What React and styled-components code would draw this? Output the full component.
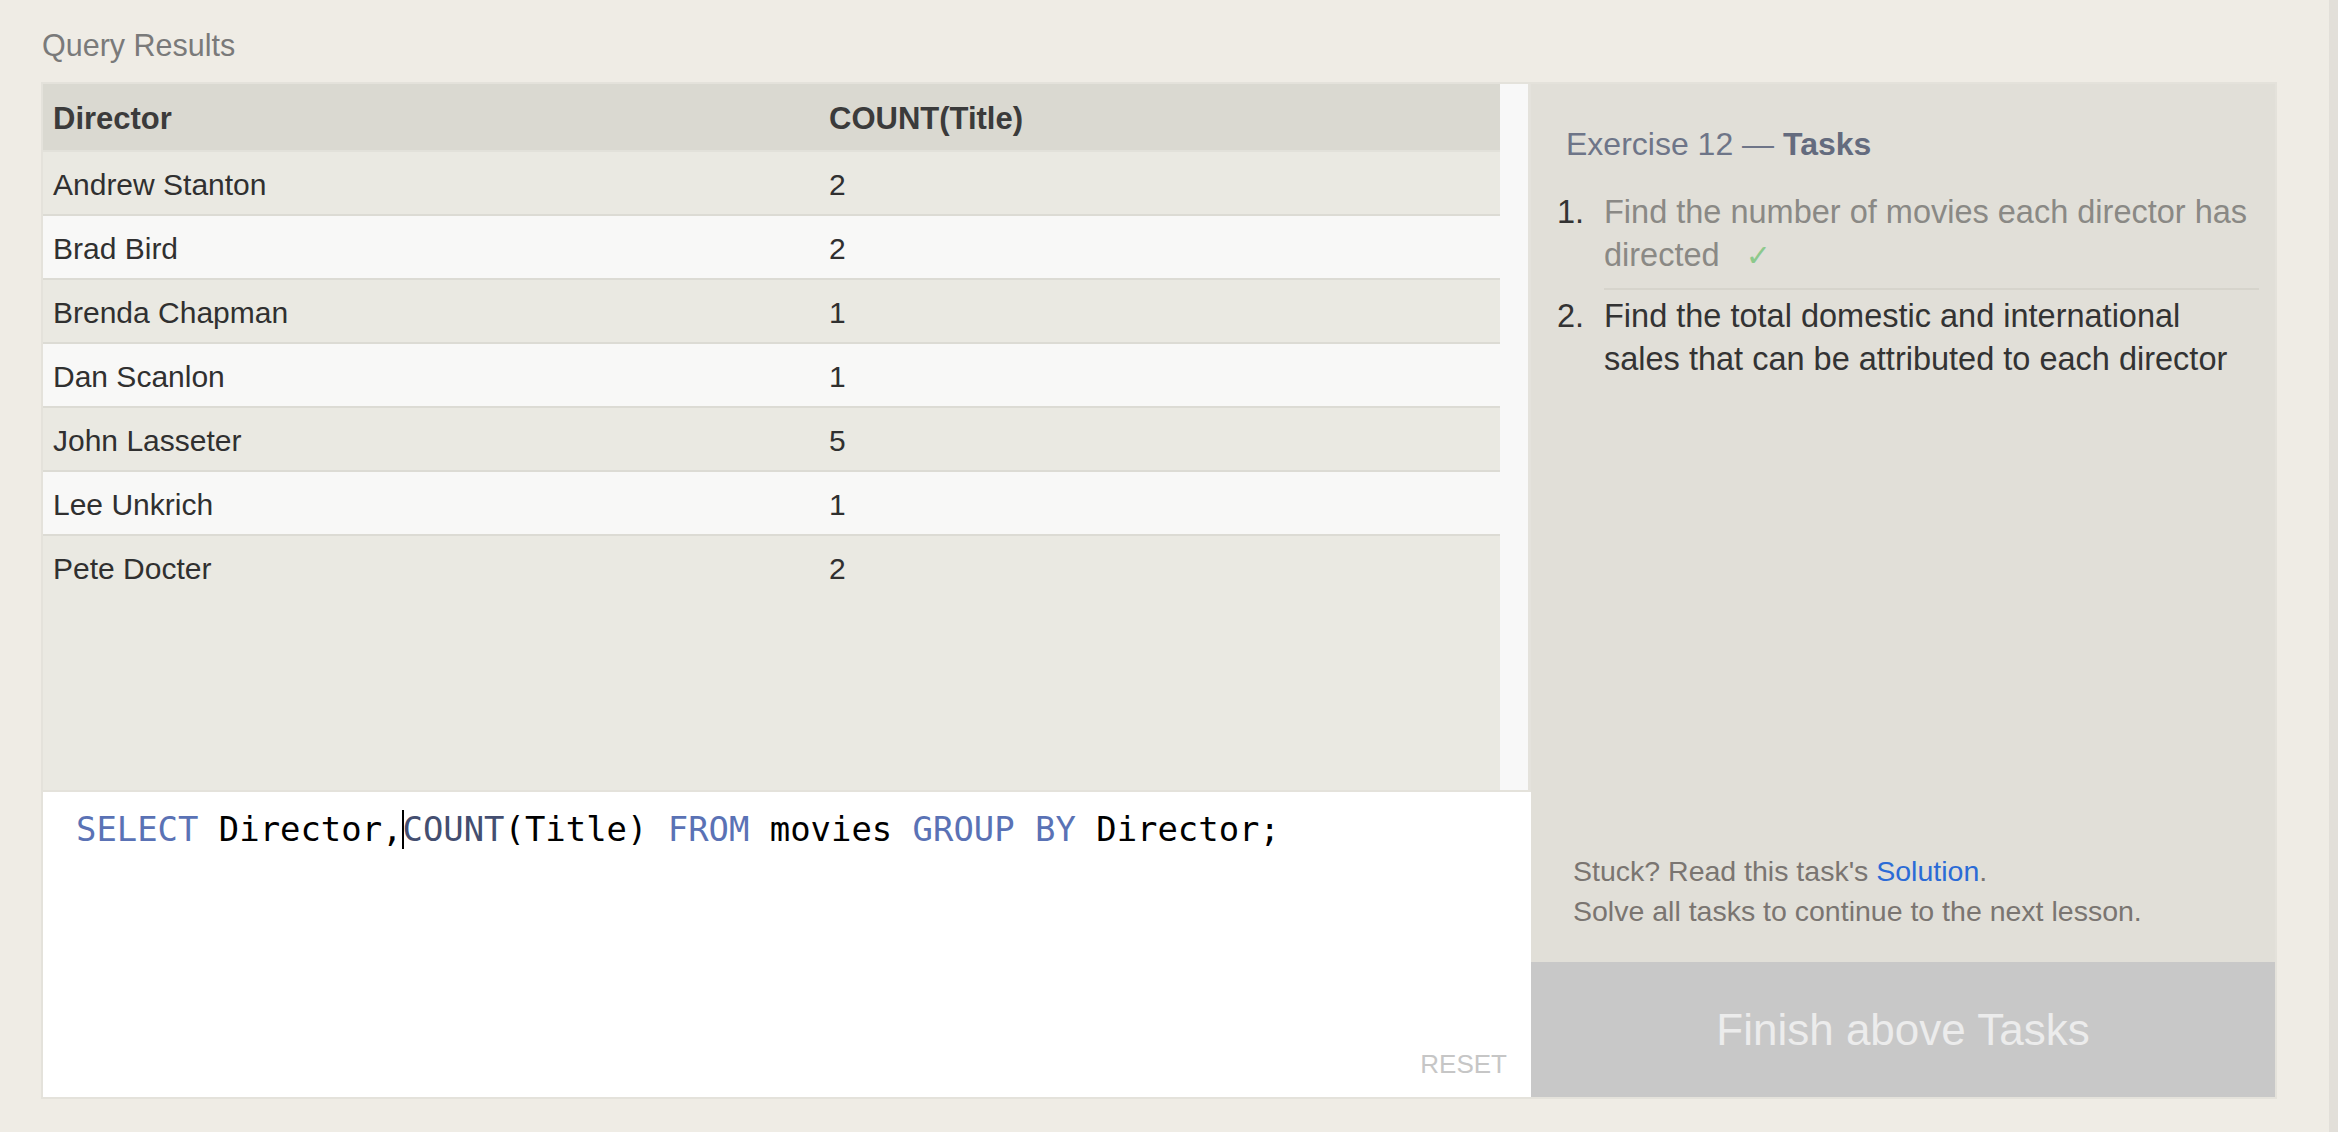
import React from "react";
import styled, { createGlobalStyle } from "styled-components";

const GlobalStyle = createGlobalStyle`
  html, body {
    margin: 0;
    padding: 0;
    background: #efece5;
    font-family: "Liberation Sans", Arial, sans-serif;
  }
`;

const rows = [
  ["Andrew Stanton", 2],
  ["Brad Bird", 2],
  ["Brenda Chapman", 1],
  ["Dan Scanlon", 1],
  ["John Lasseter", 5],
  ["Lee Unkrich", 1],
  ["Pete Docter", 2],
];

const App = () => {
  return (
    <Page>
      <GlobalStyle />
      <Main>
        <Heading>Query Results</Heading>
        <Workspace>
          <LeftColumn>
            <ResultsArea>
              <TableScroll>
                <HeaderRow>
                  <HeaderCell>Director</HeaderCell>
                  <HeaderCell>COUNT(Title)</HeaderCell>
                </HeaderRow>
                {rows.map(([name, count], i) => (
                  <Row key={name} $alt={i % 2 === 1}>
                    <Cell>{name}</Cell>
                    <Cell>{count}</Cell>
                  </Row>
                ))}
              </TableScroll>
              <ScrollTrack />
            </ResultsArea>
            <Editor>
              <CodeLine>
                <Token $kind="keyword">SELECT</Token> Director,
                <Caret />
                <Token $kind="func">COUNT</Token>(Title){" "}
                <Token $kind="keyword">FROM</Token> movies{" "}
                <Token $kind="keyword">GROUP BY</Token> Director;
              </CodeLine>
              <ResetButton>RESET</ResetButton>
            </Editor>
          </LeftColumn>
          <TaskColumn>
            <TaskPanel>
              <TaskTitle>
                Exercise 12 — <strong>Tasks</strong>
              </TaskTitle>
              <TaskList>
                <TaskItem $done>
                  <TaskNum>1.</TaskNum>
                  <TaskText $done>
                    Find the number of movies each director has directed
                    <Check>✓</Check>
                  </TaskText>
                </TaskItem>
                <TaskItem>
                  <TaskNum>2.</TaskNum>
                  <TaskText>
                    Find the total domestic and international sales that can be
                    attributed to each director
                  </TaskText>
                </TaskItem>
              </TaskList>
              <Footer>
                Stuck? Read this task's <SolutionLink>Solution</SolutionLink>.
                <br />
                Solve all tasks to continue to the next lesson.
              </Footer>
            </TaskPanel>
            <FinishButton>Finish above Tasks</FinishButton>
          </TaskColumn>
        </Workspace>
      </Main>
      <Gutter />
    </Page>
  );
};

const Page = styled.div`
  display: flex;
  min-height: 100vh;
`;

const Main = styled.main`
  flex: 1;
  padding: 27px 0 0 41px;
`;

const Gutter = styled.div`
  width: 9px;
  background: #e2dfd9;
`;

const Heading = styled.h2`
  margin: 0 0 19px 1px;
  font-size: 30.5px;
  line-height: 36px;
  font-weight: 400;
  color: #7a7a7a;
`;

const Workspace = styled.div`
  display: grid;
  grid-template-columns: 1488px 744px;
  width: 2232px;
  border: 2px solid #e4e2db;
`;

const LeftColumn = styled.div`
  display: flex;
  flex-direction: column;
`;

const ResultsArea = styled.div`
  display: flex;
  height: 706px;
  border-bottom: 2px solid #e4e2db;
`;

const TableScroll = styled.div`
  flex: 1;
  background: #eae9e2;
  color: #333;
`;

const HeaderRow = styled.div`
  display: grid;
  grid-template-columns: 776px 1fr;
  height: 66px;
  background: #dad9d1;
  border-bottom: 2px solid #e2e1da;
`;

const HeaderCell = styled.div`
  padding: 3px 10px 0;
  font-size: 31px;
  line-height: 63px;
  font-weight: 700;
  color: #3b3b3b;
`;

const Row = styled.div`
  display: grid;
  grid-template-columns: 776px 1fr;
  height: 62px;
  background: ${(p) => (p.$alt ? "#f8f8f7" : "#eae9e2")};
  border-bottom: 2px solid #dcdbd4;

  &:last-child {
    border-bottom-color: transparent;
  }
`;

const Cell = styled.div`
  padding: 3px 10px 0;
  font-size: 30px;
  line-height: 59px;
  color: #303030;
`;

const ScrollTrack = styled.div`
  width: 28px;
  background: #f8f8f8;
  border-right: 3px solid #e4e2dc;
`;

const Editor = styled.div`
  box-sizing: border-box;
  height: 305px;
  display: flex;
  flex-direction: column;
  background: #ffffff;
  padding: 18px 24px 18px 33px;
`;

const CodeLine = styled.div`
  font-family: "DejaVu Sans Mono", "Liberation Mono", monospace;
  font-size: 33.9px;
  line-height: 40px;
  color: #000;
  white-space: pre;
`;

const tokenColors = {
  keyword: "#5a72b5",
  func: "#444e70",
};

const Token = styled.span`
  color: ${(p) => tokenColors[p.$kind]};
`;

const Caret = styled.span`
  display: inline-block;
  width: 2px;
  height: 39px;
  margin-right: -2px;
  vertical-align: top;
  background: #000;
`;

const ResetButton = styled.div`
  margin-top: auto;
  align-self: flex-end;
  font-size: 26px;
  line-height: 30px;
  color: #c6c6c6;
`;

const TaskColumn = styled.div`
  display: flex;
  flex-direction: column;
`;

const TaskPanel = styled.div`
  flex: 1;
  display: flex;
  flex-direction: column;
  background: #e1dfd8;
  padding: 40px 16px 31px 35px;
`;

const TaskTitle = styled.h3`
  margin: 0 0 27px;
  font-size: 32px;
  line-height: 40px;
  font-weight: 400;
  color: #6e7588;

  strong {
    font-weight: 700;
    color: #646b7e;
  }
`;

const TaskList = styled.ol`
  margin: 0 0 0 -9px;
  padding: 0;
  list-style: none;
`;

const TaskItem = styled.li`
  display: grid;
  grid-template-columns: 47px 1fr;
  padding-bottom: ${(p) => (p.$done ? "11px" : "0")};
  margin-bottom: ${(p) => (p.$done ? "5px" : "0")};
  font-size: 32.5px;
  line-height: 43px;
`;

const TaskNum = styled.span`
  color: #333;
`;

const TaskText = styled.span`
  color: ${(p) => (p.$done ? "#8a8985" : "#333")};
  padding-bottom: ${(p) => (p.$done ? "11px" : "0")};
  border-bottom: ${(p) => (p.$done ? "2px solid #d6d4cc" : "none")};
  margin-bottom: ${(p) => (p.$done ? "-11px" : "0")};
`;

const Check = styled.span`
  display: inline-block;
  margin-left: 26px;
  font-family: "DejaVu Sans", sans-serif;
  font-size: 30px;
  line-height: 1;
  color: #8cc98c;
`;

const Footer = styled.p`
  margin: auto 0 0 7px;
  font-size: 28.5px;
  line-height: 40px;
  color: #7a7571;
`;

const SolutionLink = styled.a`
  color: #2b6bd6;
  text-decoration: none;
  cursor: pointer;
`;

const FinishButton = styled.div`
  height: 135px;
  display: flex;
  align-items: center;
  justify-content: center;
  background: #c8c8c8;
  color: #ececec;
  font-size: 44px;
`;

export default App;
